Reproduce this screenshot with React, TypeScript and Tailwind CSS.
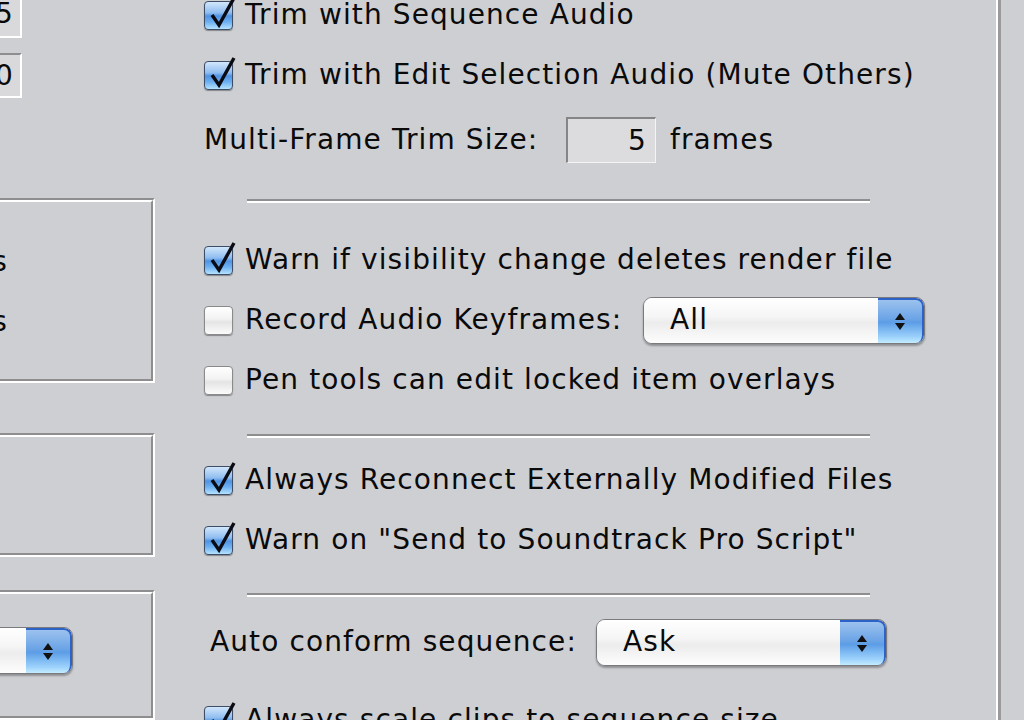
import type { ReactNode } from 'react';

const font = "font-['DejaVu_Sans',sans-serif]";

function Checkbox({ checked }: { checked: boolean }) {
  if (!checked) {
    return (
      <div className="relative w-[29px] h-[29px] shrink-0 rounded-[4px] border border-[#8a8a8a] bg-[linear-gradient(180deg,#ffffff_0%,#f2f2f2_45%,#e4e4e4_55%,#fbfbfb_100%)] shadow-[0_1px_1px_rgba(0,0,0,0.35)]" />
    );
  }
  return (
    <div className="relative w-[29px] h-[29px] shrink-0 rounded-[4px] border border-[#3d4d66] bg-[linear-gradient(180deg,#d2e7fb_0%,#8fbdf0_40%,#4f93e3_52%,#6fb2f2_75%,#b5e2ff_100%)] shadow-[0_1px_1px_rgba(0,0,0,0.35)]">
      <svg className="absolute left-0 top-[-6px]" width="34" height="36" viewBox="0 0 34 36">
        <path d="M7 19 L14 29 L29 2" fill="none" stroke="#0b0b14" strokeWidth="3.4" strokeLinejoin="miter" strokeLinecap="butt" />
      </svg>
    </div>
  );
}

function CheckRow({ checked, label, labelWidth, children }: { checked: boolean; label: string; labelWidth?: string; children?: ReactNode }) {
  return (
    <div className="h-[60px] shrink-0 flex items-center">
      <Checkbox checked={checked} />
      <span className={`ml-[12px] whitespace-nowrap ${labelWidth ?? ''}`}>{label}</span>
      {children}
    </div>
  );
}

function Separator() {
  return (
    <div className="ml-[43px] w-[623px] shrink-0 flex flex-col">
      <div className="h-[2px] bg-[#8e8e90]" />
      <div className="h-[2px] bg-white" />
    </div>
  );
}

function Gap({ h }: { h: string }) {
  return <div className={`${h} shrink-0`} />;
}

function Stepper() {
  return (
    <div className="w-[46px] h-full rounded-r-[8px] border-t-2 border-r-2 border-[#2d62c9] bg-[linear-gradient(180deg,#9cc2ee_0%,#6aa3e6_45%,#5c9de6_52%,#9ad0fb_85%,#c4ecff_100%)] flex flex-col items-center justify-center gap-[3px]">
      <svg width="10" height="7" viewBox="0 0 10 7"><path d="M5 0 L10 7 L0 7 Z" fill="#111" /></svg>
      <svg width="10" height="7" viewBox="0 0 10 7"><path d="M0 0 L10 0 L5 7 Z" fill="#111" /></svg>
    </div>
  );
}

function Popup({ value, width }: { value: string; width: string }) {
  return (
    <div className={`${width} h-[47px] shrink-0 rounded-[9px] border border-[#7a7a7c] shadow-[0_2px_2px_rgba(0,0,0,0.3)] flex overflow-hidden`}>
      <div className="flex-1 flex items-center pl-[26px] bg-[linear-gradient(180deg,#ffffff_0%,#f6f6f6_40%,#ececec_55%,#fdfdfd_100%)]">
        {value}
      </div>
      <Stepper />
    </div>
  );
}

function GroupBox({ height, children }: { height: string; children?: ReactNode }) {
  return (
    <div className={`w-[420px] ${height} shrink-0 border-t-2 border-l-2 border-[#8e8e90] border-r-2 border-b-2 border-r-white border-b-white`}>
      <div className="w-full h-full border-t-2 border-l-2 border-white border-r-2 border-b-2 border-r-[#8e8e90] border-b-[#8e8e90] flex flex-col items-end">
        {children}
      </div>
    </div>
  );
}

function Field({ value, height }: { value: string; height: string }) {
  return (
    <div className={`w-[60px] ${height} border-t-2 border-l-2 border-[#8e8e90] border-r-2 border-b-2 border-r-white border-b-white bg-[#d9d9db] flex items-center justify-end pr-[6px]`}>
      {value}
    </div>
  );
}

export default function App() {
  return (
    <div className={`w-[1024px] h-[720px] overflow-hidden bg-[#cecfd3] text-[28px] tracking-[1.1px] text-[#0a0a0a] flex ${font}`}>
      {/* left column, cut off by the window edge */}
      <div className="w-[155px] shrink-0 flex flex-col items-end">
        <div className="w-full shrink-0 flex flex-col items-start -mt-[10px]">
          <div className="-ml-[38px]"><Field value="5" height="h-[48px]" /></div>
          <div className="-ml-[38px] mt-[15px]"><Field value="0" height="h-[45px]" /></div>
        </div>
        <div className="mt-[100px] shrink-0">
          <GroupBox height="h-[185px]">
            <div className="mt-[42px] h-[36px] flex items-center pr-[143px] whitespace-nowrap">Frames</div>
            <div className="mt-[24px] h-[36px] flex items-center pr-[143px] whitespace-nowrap">Frames</div>
          </GroupBox>
        </div>
        <div className="mt-[50px] shrink-0">
          <GroupBox height="h-[124px]" />
        </div>
        <div className="mt-[33px] shrink-0">
          <GroupBox height="h-[130px]">
            <div className="mt-[33px] pr-[78px]">
              <Popup value="Off" width="w-[200px]" />
            </div>
          </GroupBox>
        </div>
      </div>

      {/* right column */}
      <div className="ml-[49px] w-[792px] shrink-0 flex flex-col -mt-[15px]">
        <CheckRow checked label="Trim with Sequence Audio" />
        <CheckRow checked label="Trim with Edit Selection Audio (Mute Others)" />
        <div className="h-[70px] shrink-0 flex items-center">
          <span className="w-[347px] whitespace-nowrap">Multi-Frame Trim Size:</span>
          <div className="ml-[15px] w-[90px] h-[46px] border-t-2 border-l-2 border-[#858587] border-r border-b border-r-[#f4f4f4] border-b-[#f4f4f4] bg-[#dcdcde] flex items-center justify-end pr-[8px]">
            5
          </div>
          <span className="ml-[14px]">frames</span>
        </div>
        <Gap h="h-[24px]" />
        <Separator />
        <Gap h="h-[27px]" />
        <CheckRow checked label="Warn if visibility change deletes render file" />
        <CheckRow checked={false} label="Record Audio Keyframes:" labelWidth="w-[386px]">
          <div className="ml-[12px]"><Popup value="All" width="w-[282px]" /></div>
        </CheckRow>
        <CheckRow checked={false} label="Pen tools can edit locked item overlays" />
        <Gap h="h-[24px]" />
        <Separator />
        <Gap h="h-[12px]" />
        <CheckRow checked label="Always Reconnect Externally Modified Files" />
        <CheckRow checked label="Warn on &quot;Send to Soundtrack Pro Script&quot;" />
        <Gap h="h-[23px]" />
        <Separator />
        <Gap h="h-[15px]" />
        <div className="h-[60px] shrink-0 flex items-center pl-[6px]">
          <span className="w-[370px] whitespace-nowrap">Auto conform sequence:</span>
          <div className="ml-[16px]"><Popup value="Ask" width="w-[291px]" /></div>
        </div>
        <Gap h="h-[18px]" />
        <CheckRow checked label="Always scale clips to sequence size" />
      </div>

      {/* window divider */}
      <div className="w-[2px] shrink-0 bg-white" />
      <div className="w-[3px] shrink-0 bg-[#9a9a9c]" />
      <div className="flex-1" />
    </div>
  );
}
